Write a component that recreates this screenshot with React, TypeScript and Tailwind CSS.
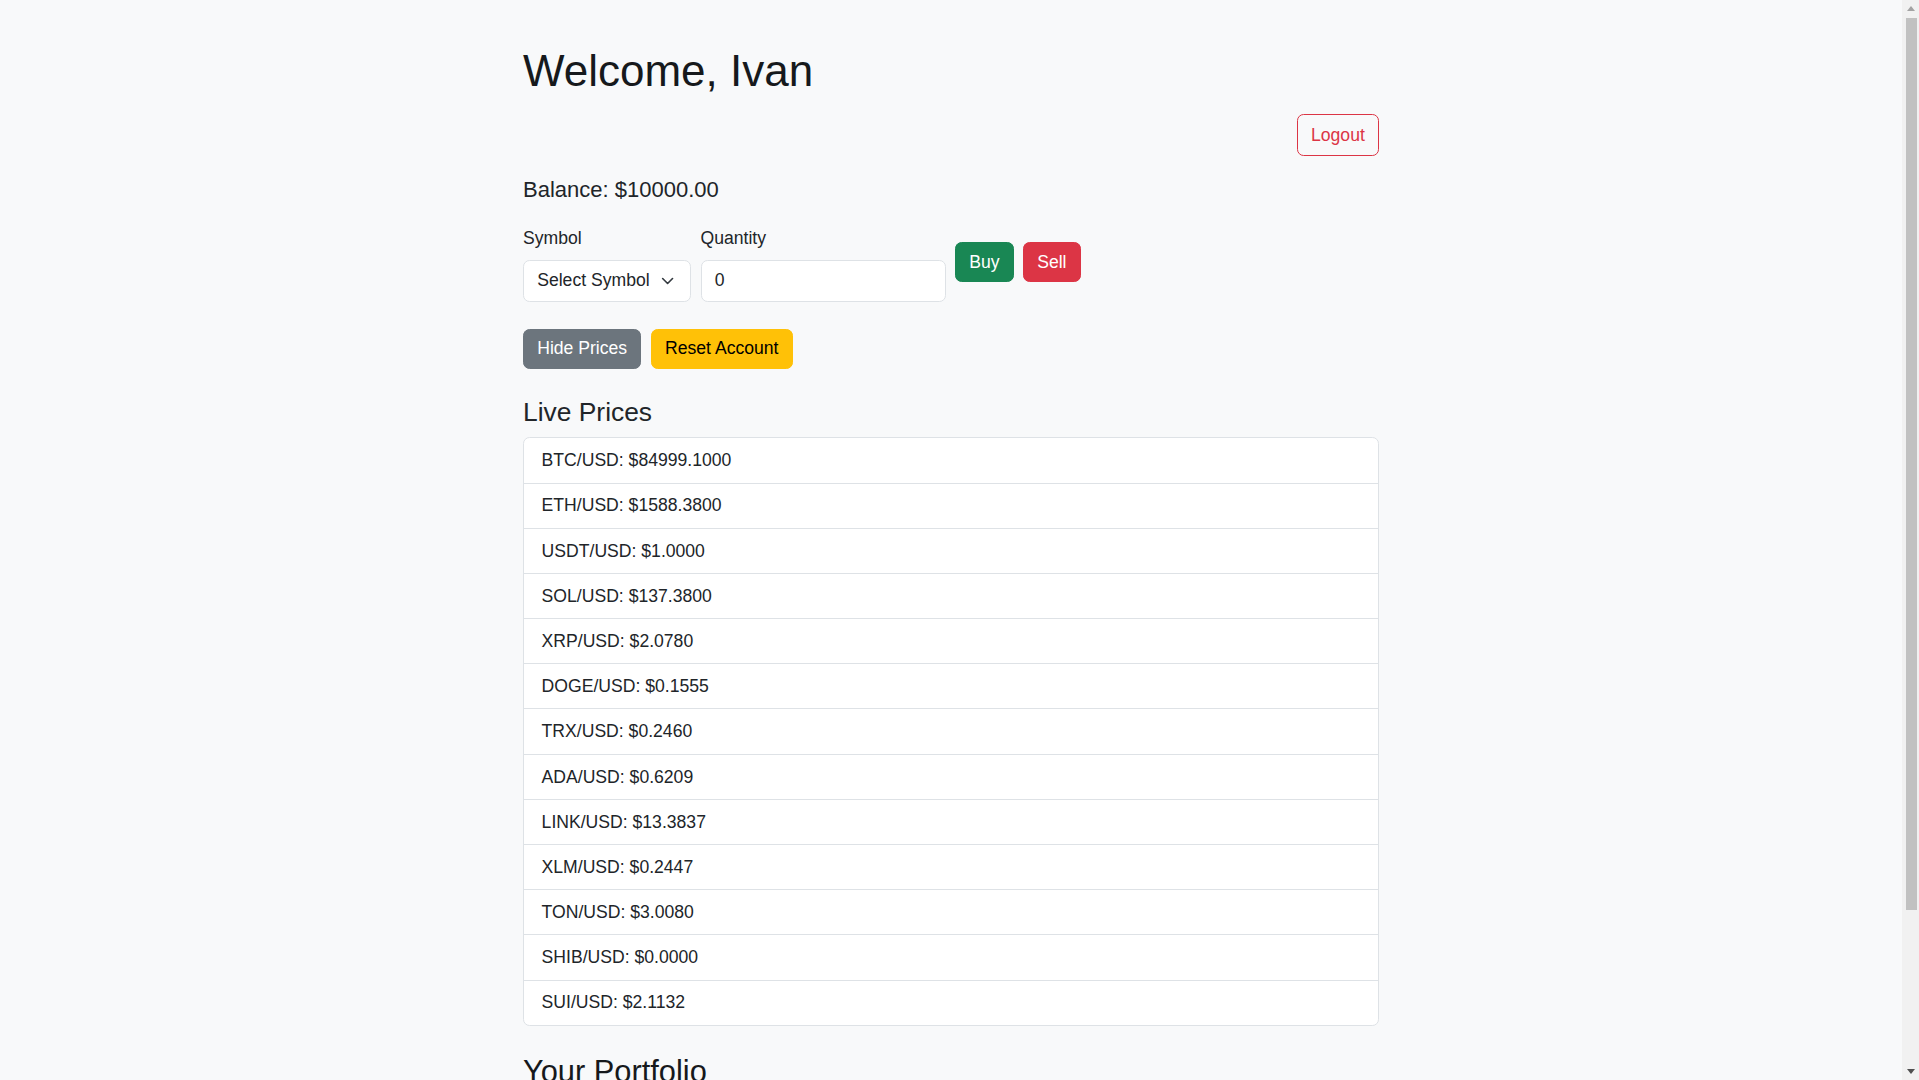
import React from "react";

const prices: [string, string][] = [
  ["BTC/USD", "$84999.1000"],
  ["ETH/USD", "$1588.3800"],
  ["USDT/USD", "$1.0000"],
  ["SOL/USD", "$137.3800"],
  ["XRP/USD", "$2.0780"],
  ["DOGE/USD", "$0.1555"],
  ["TRX/USD", "$0.2460"],
  ["ADA/USD", "$0.6209"],
  ["LINK/USD", "$13.3837"],
  ["XLM/USD", "$0.2447"],
  ["TON/USD", "$3.0080"],
  ["SHIB/USD", "$0.0000"],
  ["SUI/USD", "$2.1132"],
];

function Scrollbar() {
  return (
    <div className="fixed right-0 top-0 h-screen w-[17px] bg-[#f1f1f1] flex flex-col items-center">
      <div className="h-[17px] w-full flex items-center justify-center">
        <svg width="8" height="5" viewBox="0 0 8 5">
          <path d="M0 5 L4 0 L8 5 Z" fill="#a3a3a3" />
        </svg>
      </div>
      <div className="mt-[1px] h-[892px] w-[11px] ml-[1px] bg-[#c1c1c1]" />
      <div className="flex-1" />
      <div className="h-[17px] w-full flex items-center justify-center">
        <svg width="8" height="5" viewBox="0 0 8 5">
          <path d="M0 0 L8 0 L4 5 Z" fill="#505050" />
        </svg>
      </div>
    </div>
  );
}

export default function App() {
  return (
    <div className="min-h-screen pr-[17px] bg-[#f8f9fa] text-[#212529] font-['Liberation_Sans',Arial,sans-serif]">
      <div className="mx-auto w-[856px] pt-[45px] pb-[140px]">
        <h1 className="text-[44px] leading-[52.8px] font-normal text-[#16191c]">Welcome, Ivan</h1>
        <div className="flex justify-end mt-[16px]">
          <button className="h-[42px] px-[13.2px] border border-[#dc3545] text-[#dc3545] rounded-[6.6px] text-[17.6px] leading-[26.4px] bg-transparent">
            Logout
          </button>
        </div>
        <div className="mt-[21px] text-[22px] leading-[26.4px]">Balance: $10000.00</div>
        <div className="mt-[22px] flex items-start">
          <div className="flex flex-col w-[167.5px]">
            <label className="text-[17.6px] leading-[26.4px] mb-[8px]">Symbol</label>
            <div className="relative h-[42px] w-[167.5px] bg-white border border-[#dee2e6] rounded-[6.6px] flex items-center pl-[13.2px] text-[17.6px]">
              <span>Select Symbol</span>
              <svg
                className="absolute right-[15px] top-1/2 -translate-y-1/2"
                width="13.2"
                height="13.2"
                viewBox="0 0 16 16"
                fill="none"
              >
                <path d="m2 5 6 6 6-6" stroke="#343a40" strokeWidth="2" strokeLinecap="round" strokeLinejoin="round" />
              </svg>
            </div>
          </div>
          <div className="flex flex-col w-[245.2px] ml-[10px]">
            <label className="text-[17.6px] leading-[26.4px] mb-[8px]">Quantity</label>
            <div className="h-[42px] w-[245.2px] bg-white border border-[#dee2e6] rounded-[6.6px] flex items-center pl-[13.2px] text-[17.6px]">
              0
            </div>
          </div>
          <button className="ml-[9.3px] mt-[17px] h-[40px] px-[13.2px] border border-[#198754] bg-[#198754] text-white rounded-[6.6px] text-[17.6px]">
            Buy
          </button>
          <button className="ml-[9.3px] mt-[17px] h-[40px] px-[13.2px] border border-[#dc3545] bg-[#dc3545] text-white rounded-[6.6px] text-[17.6px]">
            Sell
          </button>
        </div>
        <div className="mt-[27px] flex gap-[9.5px]">
          <button className="h-[40px] px-[13.2px] border border-[#6c757d] bg-[#6c757d] text-white rounded-[6.6px] text-[17.6px]">
            Hide Prices
          </button>
          <button className="h-[40px] px-[13.2px] border border-[#ffc107] bg-[#ffc107] text-black rounded-[6.6px] text-[17.6px]">
            Reset Account
          </button>
        </div>
        <h4 className="mt-[28px] mb-[9px] text-[26.4px] leading-[31.7px] font-normal">Live Prices</h4>
        <ul className="bg-white border border-[#dee2e6] rounded-[6.6px]">
          {prices.map(([s, p], i) => (
            <li
              key={s}
              className={
                "px-[17.6px] py-[8.9px] text-[17.6px] leading-[26.4px] " +
                (i < prices.length - 1 ? "border-b border-[#dee2e6]" : "")
              }
            >
              {s}: {p}
            </li>
          ))}
        </ul>
        <h3 className="mt-[27px] mb-[9px] text-[30.8px] leading-[37px] font-normal text-[#16191c]">Your Portfolio</h3>
        <p className="text-[17.6px] leading-[26.4px]">No holdings yet.</p>
      </div>
      <Scrollbar />
    </div>
  );
}
